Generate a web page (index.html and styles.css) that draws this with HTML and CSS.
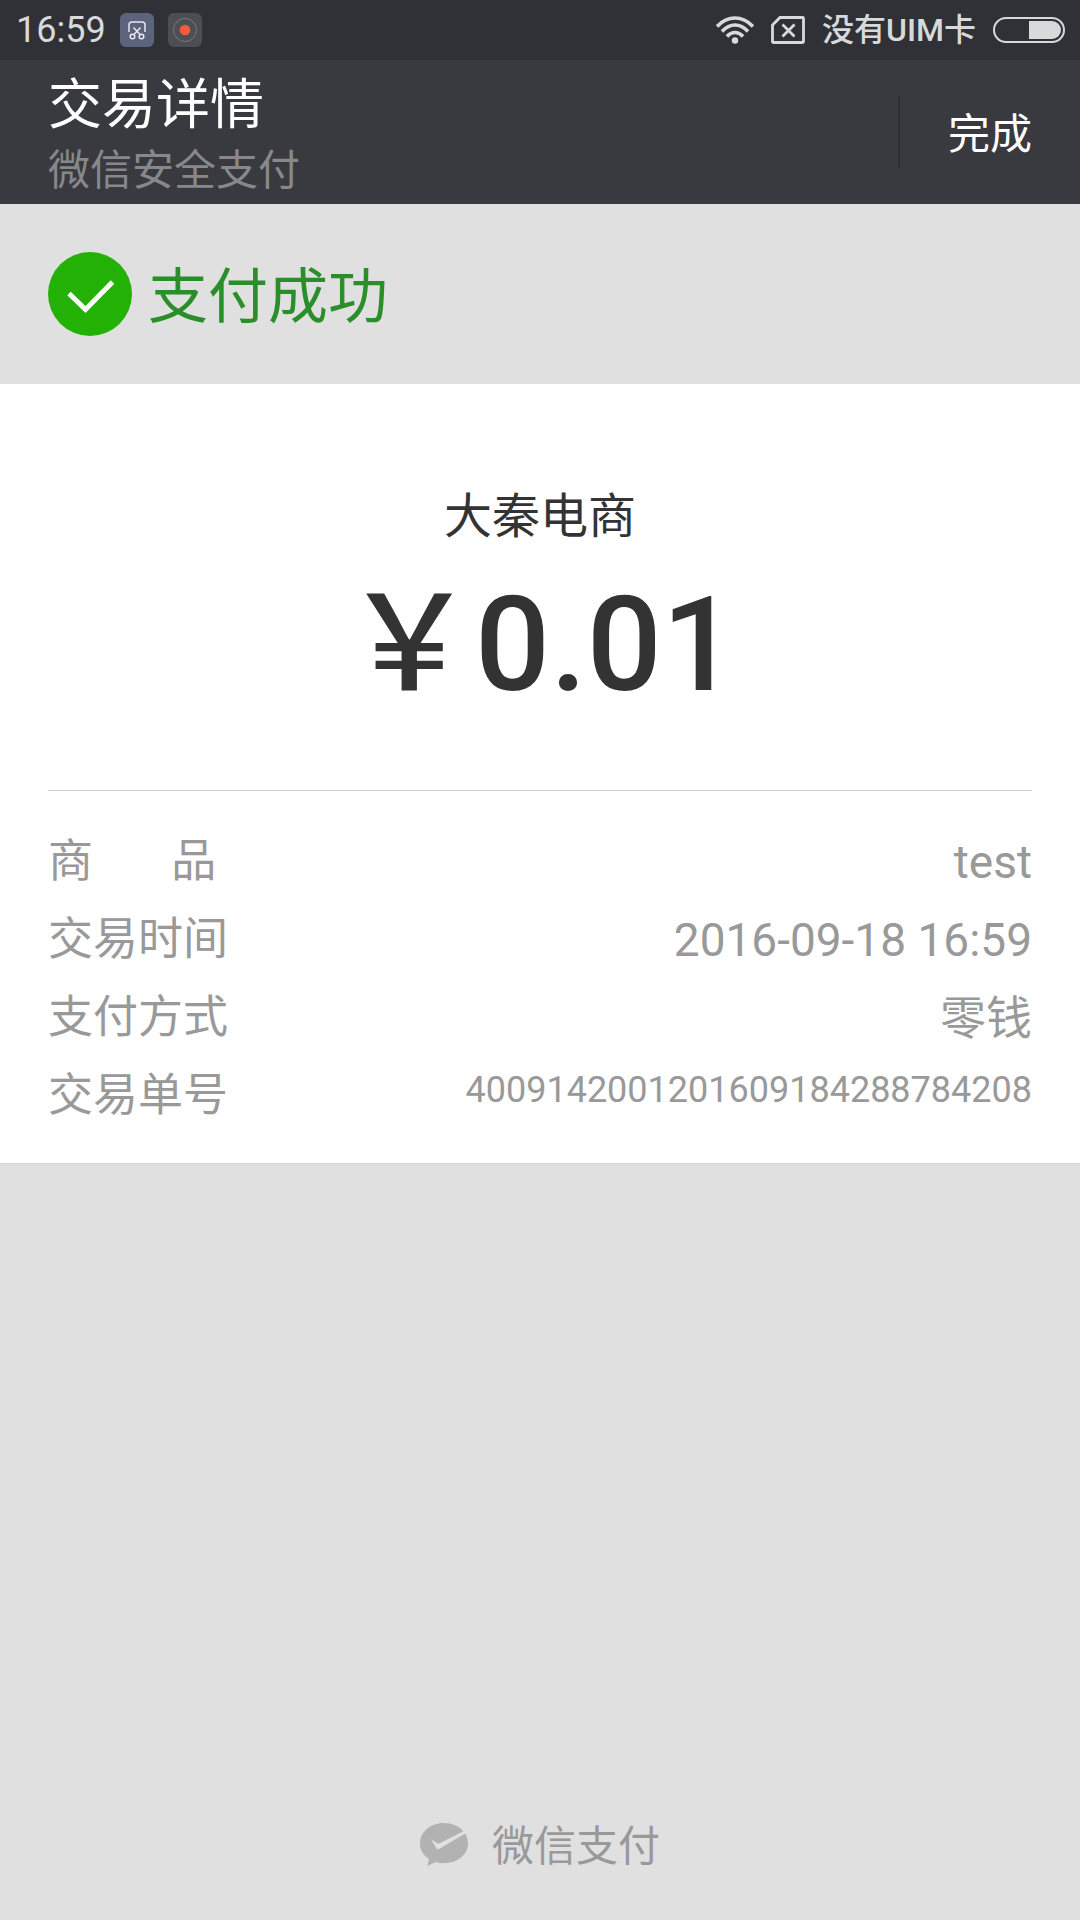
FILE: index.html
```
<!DOCTYPE html>
<html lang="zh-CN">
<head>
  <meta charset="UTF-8">
  <meta name="viewport" content="width=device-width, initial-scale=1.0">
  <title>交易详情</title>
  <link rel="stylesheet" href="styles.css">
</head>
<body>
  <div class="statusbar">
    <div class="statusbar-group left">
      <span class="time">16:59</span>
      <svg width="34" height="34" viewBox="0 0 34 34">
        <rect width="34" height="34" rx="6" fill="#5c637c"/>
        <g fill="none" stroke="#e6e8ee" stroke-width="1.500">
          <path d="M9 19v-7q0-3 3-3h10q3 0 3 3v7"/>
          <path d="M13.500 14.500l6.500 7M20.500 14.500l-6.500 7"/>
          <circle cx="12.500" cy="23.500" r="2.300"/>
          <circle cx="21.500" cy="23.500" r="2.300"/>
        </g>
      </svg>
      <svg width="34" height="34" viewBox="0 0 34 34">
        <rect width="34" height="34" rx="6" fill="#4b4f53"/>
        <circle cx="17" cy="17" r="11.500" fill="none" stroke="#7d7683" stroke-width="1"/>
        <circle cx="17" cy="17" r="5.300" fill="#f55a3c"/>
      </svg>
    </div>
    <div class="statusbar-group">
      <svg width="38" height="28" viewBox="0 0 38 28">
        <g fill="none" stroke="#d8d9db" stroke-width="3.600">
          <path d="M1 10.500Q9 2 19 2t18 8.500"/>
          <path d="M6 15.500Q12 9 19 9t13 6.500"/>
          <path d="M11 20.500Q14.500 16.500 19 16.500t8 4"/>
        </g>
        <circle cx="19" cy="24.500" r="3.200" fill="#d8d9db"/>
      </svg>
      <svg width="34" height="28" viewBox="0 0 34 28" fill="none" stroke="#d8d9db">
        <path d="M9 1.500h22.500q1 0 1 1v23q0 1-1 1h-29q-1 0-1-1V9z" stroke-width="2.800"/>
        <path d="M11.500 8.500l12 12M23.500 8.500l-12 12" stroke-width="2.800"/>
      </svg>
      <span class="sim">没有UIM卡</span>
      <svg width="72" height="26" viewBox="0 0 72 26">
        <rect x="1" y="1" width="70" height="24" rx="12" fill="none" stroke="#d8d9db" stroke-width="2"/>
        <path d="M36 4h23a9 9 0 0 1 0 18H36z" fill="#d8d9db"/>
      </svg>
    </div>
  </div>

  <header class="header">
    <div class="header-titles">
      <h1 class="title">交易详情</h1>
      <p class="subtitle">微信安全支付</p>
    </div>
    <button class="done" type="button">完成</button>
  </header>

  <main>
    <section class="result">
      <svg width="84" height="84" viewBox="0 0 84 84">
        <circle cx="42" cy="42" r="42" fill="#22b104"/>
        <path d="M21 41.500L37.500 57.500L64.500 30" fill="none" stroke="#fff" stroke-width="5"/>
      </svg>
      <h2 class="result-text">支付成功</h2>
    </section>

    <section class="card">
      <div class="payment">
        <p class="merchant">大秦电商</p>
        <p class="amount">&#xFFE5;0.01</p>
      </div>
      <dl class="details">
        <div class="row">
          <dt>商&nbsp;&nbsp;&nbsp;&nbsp;&nbsp;&nbsp;&nbsp;品</dt>
          <dd>test</dd>
        </div>
        <div class="row">
          <dt>交易时间</dt>
          <dd>2016-09-18 16:59</dd>
        </div>
        <div class="row">
          <dt>支付方式</dt>
          <dd>零钱</dd>
        </div>
        <div class="row">
          <dt>交易单号</dt>
          <dd class="order-no">4009142001201609184288784208</dd>
        </div>
      </dl>
    </section>
  </main>

  <footer class="footer">
    <svg width="48" height="44" viewBox="0 0 48 44">
      <path d="M24 0C10.500 0 0 9 0 20.500c0 6.500 3.500 12 9 15.500L7.500 43l8-4c2.700.8 5.500 1.200 8.500 1.200 13.500 0 24-8.700 24-19.700 0-3.600-1-7-2.800-9.900L19 26c-1 .6-2 .3-2.600-.7L10.800 16l6.200 4.200c.9.5 1.700.5 2.600.1L43.500 8.300C39 3.200 32 0 24 0z" fill="#b2b2b2"/>
    </svg>
    <span class="brand">微信支付</span>
  </footer>
</body>
</html>
```
FILE: styles.css
```
* {
  box-sizing: border-box;
  margin: 0;
  padding: 0;
}
body {
  display: flex;
  flex-direction: column;
  min-height: 100vh;
  background: #e0e0e0;
  color: #333;
  font-family: Roboto, "Noto Sans CJK SC", sans-serif;
}
svg {
  display: block;
  flex: none;
}

/* status bar */
.statusbar {
  display: flex;
  justify-content: space-between;
  align-items: center;
  height: 60px;
  padding: 0 15px 0 16px;
  background: #303136;
  color: #d8d9db;
}
.statusbar-group {
  display: flex;
  align-items: center;
  gap: 17px;
}
.left {
  gap: 14px;
}
.time {
  font-size: 36px;
  line-height: 60px;
}
.sim {
  font-size: 32px;
  line-height: 60px;
  font-weight: 500;
}

/* header */
.header {
  display: flex;
  justify-content: space-between;
  align-items: center;
  padding-left: 48px;
  background: #393a3f;
}
.header-titles {
  padding-top: 14px;
}
.title {
  color: #fff;
  font-size: 54px;
  font-weight: 400;
  line-height: 64px;
}
.subtitle {
  color: #87888c;
  font-size: 42px;
  line-height: 66px;
}
.done {
  height: 72px;
  padding: 0 48px 4px;
  border: 0;
  border-left: 2px solid #2f3034;
  background: none;
  color: #fff;
  font-family: inherit;
  font-size: 42px;
}

/* result */
.result {
  display: flex;
  align-items: center;
  gap: 16px;
  padding: 48px;
}
.result-text {
  padding-top: 8px;
  color: #2a8f2a;
  font-size: 60px;
  font-weight: 400;
  line-height: 76px;
}

/* card */
.card {
  padding: 100px 48px 28px;
  border-bottom: 1px solid #d5d5d5;
  background: #fff;
}
.payment {
  padding-bottom: 50px;
  border-bottom: 1px solid #d0d0d0;
  text-align: center;
}
.merchant {
  font-size: 48px;
  line-height: 66px;
}
.amount {
  font-size: 132px;
  font-weight: 500;
  line-height: 190px;
}
.details {
  padding-top: 32px;
}
.row {
  display: flex;
  justify-content: space-between;
  color: #999;
  font-size: 45px;
  line-height: 78px;
}
.row dd {
  font-size: 46px;
}
.row .order-no {
  font-size: 36px;
  line-height: 66px;
}

/* footer */
.footer {
  display: flex;
  justify-content: center;
  align-items: center;
  gap: 24px;
  margin-top: auto;
  padding-bottom: 40px;
}
.brand {
  padding-top: 4px;
  color: #999;
  font-size: 42px;
  line-height: 66px;
}
```
